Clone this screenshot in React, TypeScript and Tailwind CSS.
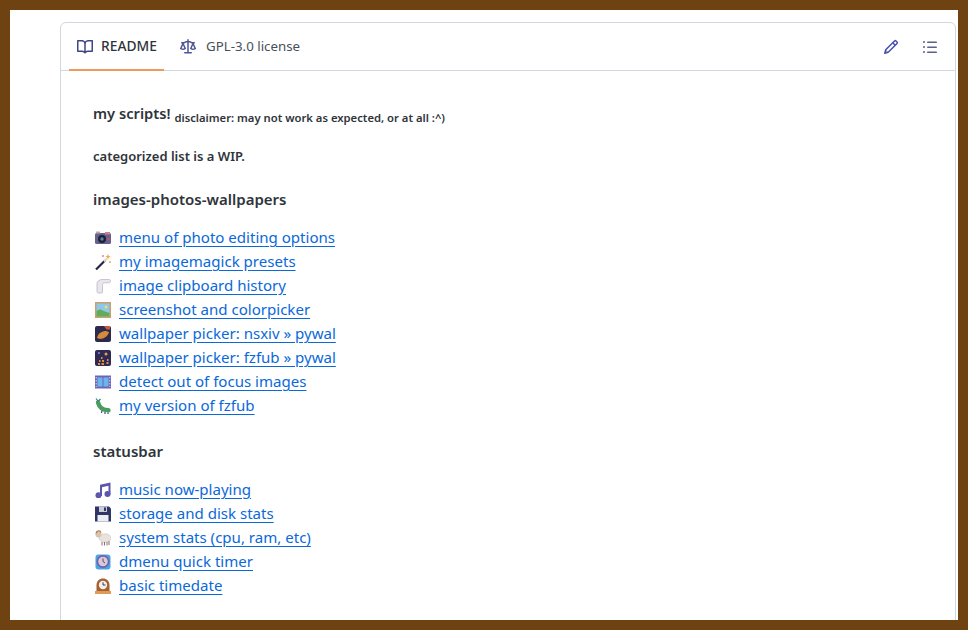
import type { ReactNode } from "react"

function Octicon({ d, className }: { d: string; className: string }) {
  return (
    <svg viewBox="0 0 16 16" fill="currentColor" className={`h-4 w-4 shrink-0 ${className}`}>
      <path d={d} />
    </svg>
  )
}

const bookPath =
  "M0 1.75A.75.75 0 0 1 .75 1h4.253c1.227 0 2.317.59 3 1.501A3.743 3.743 0 0 1 11.006 1h4.245a.75.75 0 0 1 .75.75v10.5a.75.75 0 0 1-.75.75h-4.507a2.25 2.25 0 0 0-1.591.659l-.622.621a.75.75 0 0 1-1.06 0l-.622-.621A2.25 2.25 0 0 0 5.258 13H.75a.75.75 0 0 1-.75-.75Zm7.251 10.324.004-5.073-.002-2.253A2.25 2.25 0 0 0 5.003 2.5H1.5v9h3.757a3.75 3.75 0 0 1 1.994.574ZM8.755 4.75l-.004 7.322a3.752 3.752 0 0 1 1.992-.572H14.5v-9h-3.495a2.25 2.25 0 0 0-2.25 2.25Z"
const lawPath =
  "M8.75.75V2h.985c.304 0 .603.08.867.231l1.29.736c.038.022.08.033.124.033h2.234a.75.75 0 0 1 0 1.5h-.427l2.111 4.692a.75.75 0 0 1-.154.838l-.53-.53.529.531-.001.002-.002.002-.006.006-.006.005-.01.01-.045.04c-.21.176-.441.327-.686.45C14.556 10.78 13.88 11 13 11a4.498 4.498 0 0 1-2.023-.454 3.544 3.544 0 0 1-.686-.45l-.045-.04-.016-.015-.006-.006-.004-.004v-.001a.75.75 0 0 1-.154-.838L12.178 4.5h-.162c-.305 0-.604-.079-.868-.231l-1.29-.736a.245.245 0 0 0-.124-.033H8.75V13h2.5a.75.75 0 0 1 0 1.5h-6.5a.75.75 0 0 1 0-1.5h2.5V3.5h-.984a.245.245 0 0 0-.124.033l-1.289.737c-.265.15-.564.23-.869.23h-.162l2.112 4.692a.75.75 0 0 1-.154.838l-.53-.53.529.531-.001.002-.002.002-.006.006-.016.015-.045.04c-.21.176-.441.327-.686.45C4.556 10.78 3.88 11 3 11a4.498 4.498 0 0 1-2.023-.454 3.544 3.544 0 0 1-.686-.45l-.045-.04-.016-.015-.006-.006-.004-.004v-.001a.75.75 0 0 1-.154-.838L2.178 4.5H1.75a.75.75 0 0 1 0-1.5h2.234a.249.249 0 0 0 .125-.033l1.288-.737c.265-.15.564-.23.869-.23h.984V.75a.75.75 0 0 1 1.5 0Zm2.945 8.477c.285.135.718.273 1.305.273s1.02-.138 1.305-.273L13 6.327Zm-10 0c.285.135.718.273 1.305.273s1.02-.138 1.305-.273L3 6.327Z"
const pencilPath =
  "M11.013 1.427a1.75 1.75 0 0 1 2.474 0l1.086 1.086a1.75 1.75 0 0 1 0 2.474l-8.61 8.61c-.21.21-.47.364-.756.445l-3.251.93a.75.75 0 0 1-.927-.928l.929-3.25c.081-.286.235-.547.445-.758l8.61-8.61Zm.176 4.823L9.75 4.81l-6 6a.249.249 0 0 0-.063.108l-.558 1.953 1.953-.558a.253.253 0 0 0 .108-.064Zm1.238-3.763a.25.25 0 0 0-.354 0L10.811 3.75l1.439 1.44 1.263-1.263a.25.25 0 0 0 0-.354Z"
const listPath =
  "M5.75 2.5h8.5a.75.75 0 0 1 0 1.5h-8.5a.75.75 0 0 1 0-1.5Zm0 5h8.5a.75.75 0 0 1 0 1.5h-8.5a.75.75 0 0 1 0-1.5Zm0 5h8.5a.75.75 0 0 1 0 1.5h-8.5a.75.75 0 0 1 0-1.5ZM2 14a1 1 0 1 1 0-2 1 1 0 0 1 0 2Zm1-6a1 1 0 1 1-2 0 1 1 0 0 1 2 0ZM2 4a1 1 0 1 1 0-2 1 1 0 0 1 0 2Z"

function Emoji({ children }: { children: ReactNode }) {
  return (
    <svg viewBox="0 0 16 16" className="h-4 w-4 shrink-0">
      {children}
    </svg>
  )
}

const camera = (
  <Emoji>
    <rect x="0" y="3" width="16" height="11" rx="1.5" fill="#66608f" />
    <rect x="1" y="1.500" width="4" height="2" fill="#b9a9a0" />
    <rect x="10" y="2" width="5" height="2.500" fill="#c9828a" />
    <circle cx="7" cy="9" r="4" fill="#1c2230" />
    <circle cx="7" cy="9" r="1.700" fill="#5a7fb0" />
    <circle cx="13.500" cy="9" r="1.200" fill="#c9515a" />
  </Emoji>
)
const wand = (
  <Emoji>
    <path d="M1 15.500 10 6.500" stroke="#2b2440" strokeWidth="2.200" />
    <path d="M9 7.500l3-3" stroke="#d8d3dc" strokeWidth="2.200" />
    <path d="M13 0l.8 2 2 .6-2 .8-.8 2-.8-2-1.800-.8 1.800-.6z" fill="#f0a848" />
    <circle cx="8" cy="2" r="1" fill="#e8828a" />
    <circle cx="15" cy="8" r="1" fill="#e8b050" />
  </Emoji>
)
const clipboard = (
  <Emoji>
    <path
      d="M2 6C2 3 4.500 1.500 7 1.500h7c1 0 1.500.7 1.500 1.600 0 1-.6 1.700-1.500 1.700H9.500C8 4.800 7.500 6 7.500 7.500V14c0 .8-.5 1-1.200 1H3.500c-1 0-1.500-.5-1.500-1.500z"
      fill="#e9e7ec"
      stroke="#bdb7c8"
      strokeWidth="0.800"
    />
  </Emoji>
)
const picture = (
  <Emoji>
    <rect x="0" y="0" width="16" height="16" fill="#cf9d68" />
    <rect x="1.500" y="1.500" width="13" height="13" fill="#8cc8ea" />
    <path d="M1.500 14.500V9c3-2 5-2 7 0l6 2v3.500z" fill="#62ac56" />
    <circle cx="11" cy="5" r="1.500" fill="#f2d878" />
  </Emoji>
)
const nightLeaf = (
  <Emoji>
    <rect x="0" y="0" width="16" height="16" rx="2" fill="#2e2a4d" />
    <path d="M2 12c1-5 5-7 9-7l3 1c-1 4-5 7-9 7z" fill="#d68a3a" />
    <path d="M9 0h6v3.500h-3.500z" fill="#c55f3a" />
  </Emoji>
)
const nightCity = (
  <Emoji>
    <rect x="0" y="0" width="16" height="16" rx="2" fill="#2f2a55" />
    <circle cx="11" cy="4" r="1.500" fill="#e0a24a" />
    <circle cx="4" cy="3" r="1" fill="#8d8bd0" />
    <path d="M6 7h1.500v2H6zM4 10h1.500v2H4zM7 10h2v2H7zM3 13h2v2H3zM6.500 13h2.500v2H6.500zM12 9h1.500v2H12zM11.500 12h2v2h-2z" fill="#e0913a" />
  </Emoji>
)
const film = (
  <Emoji>
    <rect x="0" y="1.500" width="16" height="13" fill="#6b66b4" />
    <rect x="2.500" y="3.500" width="5" height="9" fill="#6cb4ee" />
    <rect x="8.500" y="3.500" width="5" height="9" fill="#6cb4ee" />
    <path d="M.7 3h1v1.500h-1zM.7 6h1v1.500h-1zM.7 9h1v1.500h-1zM.7 12h1v1h-1zM14.300 3h1v1.500h-1zM14.300 6h1v1.500h-1zM14.300 9h1v1.500h-1zM14.300 12h1v1h-1z" fill="#d8d6f0" />
  </Emoji>
)
const caterpillar = (
  <Emoji>
    <path d="M3 4.500c1 4 4 7.500 10.500 7.800" fill="none" stroke="#4a9d5c" strokeWidth="4.400" strokeLinecap="round" />
    <path d="M1 .5l2 2.500M5.500 1 3.500 3" stroke="#2b7f78" strokeWidth="1.200" />
    <path d="M7 12.500l-.5 2.500M10 14v2M13 14.500V16" stroke="#3e4a7a" strokeWidth="1.200" />
  </Emoji>
)
const note = (
  <Emoji>
    <path d="M5 2.800 15.500 .5v12h-2V3.800L7 5.200V14H5z" fill="#5a57ad" />
    <circle cx="3.500" cy="13.300" r="3" fill="#5a57ad" />
    <circle cx="12.500" cy="12" r="3" fill="#5a57ad" />
  </Emoji>
)
const floppy = (
  <Emoji>
    <path d="M0 .5h14l2 2v13H0z" fill="#2f3566" />
    <rect x="4" y=".5" width="8" height="5.500" fill="#c8cdd8" />
    <rect x="9" y="1.500" width="2" height="3.500" fill="#2f3566" />
    <rect x="2.500" y="9" width="11" height="6.500" fill="#eceef4" />
  </Emoji>
)
const ram = (
  <Emoji>
    <ellipse cx="10" cy="8" rx="6" ry="4.200" fill="#e9e3dc" stroke="#c8c2c8" strokeWidth="0.600" />
    <circle cx="3.500" cy="4.500" r="3" fill="#d8c3ae" />
    <path d="M1 3.500c.5-3 4-3.500 5-1" fill="none" stroke="#a87e50" strokeWidth="1.300" />
    <path d="M7 12v3.500M9.500 12v3.500M12 12v3.500M14 11v4" stroke="#8a6f6a" strokeWidth="1" />
  </Emoji>
)
const timer = (
  <Emoji>
    <rect x="0.500" y="0.500" width="15" height="15" rx="3" fill="#4aa3e8" />
    <circle cx="8" cy="7.500" r="6.500" fill="#6d62a8" />
    <circle cx="8" cy="7.500" r="4.800" fill="#d9c8d8" />
    <path d="M8 4.500v3L10 9" fill="none" stroke="#6d3f58" strokeWidth="1" />
  </Emoji>
)
const mantelClock = (
  <Emoji>
    <path d="M1.500 14V7c0-3.800 3-6.500 6.500-6.500s6.500 2.700 6.500 6.500v7z" fill="#a85f30" />
    <rect x="0" y="13" width="16" height="3" fill="#e09a58" />
    <circle cx="8" cy="7" r="4.200" fill="#f4efec" />
    <path d="M8 4.300V7h2.500" fill="none" stroke="#3a3550" strokeWidth="1" />
  </Emoji>
)

const imageLinks: [ReactNode, string][] = [
  [camera, "menu of photo editing options"],
  [wand, "my imagemagick presets"],
  [clipboard, "image clipboard history"],
  [picture, "screenshot and colorpicker"],
  [nightLeaf, "wallpaper picker: nsxiv » pywal"],
  [nightCity, "wallpaper picker: fzfub » pywal"],
  [film, "detect out of focus images"],
  [caterpillar, "my version of fzfub"],
]

const statusLinks: [ReactNode, string][] = [
  [note, "music now-playing"],
  [floppy, "storage and disk stats"],
  [ram, "system stats (cpu, ram, etc)"],
  [timer, "dmenu quick timer"],
  [mantelClock, "basic timedate"],
]

function LinkList({ items }: { items: [ReactNode, string][] }) {
  return (
    <ul className="flex flex-col">
      {items.map(([icon, label]) => (
        <li key={label} className="flex h-6 items-center gap-2 pl-[2px]">
          {icon}
          <a href="#" className="-mt-[2px] text-[15.05px] text-[#0969da] underline underline-offset-[3px]">
            {label}
          </a>
        </li>
      ))}
    </ul>
  )
}

export default function App() {
  return (
    <div className="h-[630px] w-[968px] overflow-hidden border-[10px] border-[#6f4212] bg-white pl-[50px] pr-[2px] pt-3 font-['Noto_Sans',sans-serif] text-[#2f343b]">
      <div className="min-h-[640px] rounded-t-md border border-[#d0d7de] bg-white">
        <div className="flex h-[48px] items-center justify-between border-b border-[#d0d7de] pl-2 pr-[17px]">
          <div className="flex h-full items-center">
            <div className="flex h-[48px] w-[95px] items-center gap-2 border-b-2 border-[#ef9a5c] pl-2 pt-[2px] text-[13.8px] font-medium">
              <Octicon d={bookPath} className="text-[#3f4684]" />
              README
            </div>
            <div className="ml-4 flex items-center gap-[10px] pt-[1px] text-[13.300px] text-[#4a4f5a]">
              <Octicon d={lawPath} className="text-[#4f5596]" />
              GPL-3.0 license
            </div>
          </div>
          <div className="flex items-center gap-[23px]">
            <Octicon d={pencilPath} className="text-[#4750b0]" />
            <Octicon d={listPath} className="text-[#5a5f8f]" />
          </div>
        </div>
        <div className="px-8 pt-[30px]">
          <p className="h-6 text-[14.7px] font-semibold leading-6">
            my scripts! <sub className="text-[11.25px]">disclaimer: may not work as expected, or at all :^)</sub>
          </p>
          <p className="mt-[19px] h-6 text-[13px] font-semibold leading-6">categorized list is a WIP.</p>
          <h2 className="mt-[19px] h-6 text-[15px] font-semibold leading-6">images-photos-wallpapers</h2>
          <div className="mt-[15px]">
            <LinkList items={imageLinks} />
          </div>
          <h2 className="mt-[21px] h-6 text-[15px] font-semibold leading-6">statusbar</h2>
          <div className="mt-[15px]">
            <LinkList items={statusLinks} />
          </div>
        </div>
      </div>
    </div>
  )
}
